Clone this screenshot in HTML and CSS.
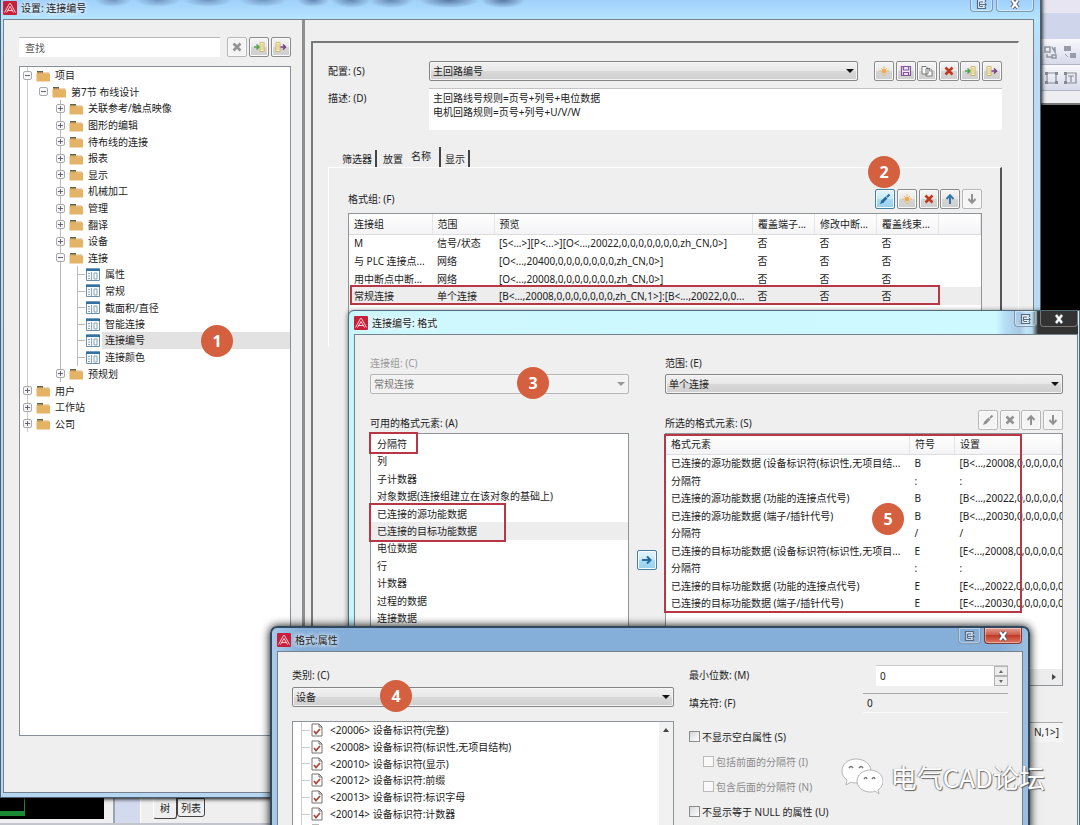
FILE: index.html
```html
<!DOCTYPE html>
<html lang="zh-CN">
<head>
<meta charset="utf-8">
<title>设置: 连接编号</title>
<link rel="stylesheet" href="styles.css">
</head>
<body>
<svg class="defs" aria-hidden="true">
  <symbol id="logo" viewBox="0 0 14 14"><rect width="14" height="14" rx="1" fill="#c8203c"/><path d="M1.500 11.500 6.500 2.500h1l5 9M3.500 11.500 7 5.500l3.500 6M4.500 9.500h5" fill="none" stroke="#ffdfe0" stroke-width=".9"/></symbol>
  <symbol id="folder" viewBox="0 0 14 13"><path d="M1 2h6v2H1z" fill="#596247"/><path d="M1 3.500h5l1 1h7v8H.5v-8z" fill="#e4b366"/><path d="M1 4h12" stroke="#c99a55" stroke-width=".8"/></symbol>
  <symbol id="sheet" viewBox="0 0 14 13"><path d="M.5 1h13v11.500H.5z" fill="#f5fbff" stroke="#6f8fa8"/><path d="M0 .5h14V3H0z" fill="#34709f"/><path d="M2 5.500h2M2 8h2M2 10.500h2M5.500 4v8M8 5h3v6H8z" stroke="#809bb0" fill="none" stroke-width=".9"/></symbol>
  <symbol id="cross" viewBox="0 0 12 12"><path d="m2.500 2.500 7 7m0-7-7 7" stroke="currentColor" stroke-width="2.600" fill="none"/></symbol>
  <symbol id="import" viewBox="0 0 12 12"><path d="M1 6h4M3.500 3.500 6 6 3.500 8.500" stroke="#50a34c" stroke-width="1.500" fill="none"/><path d="M7 1.500h4v9H7zM7.500 4h3M7.500 6h3M7.500 8h3" stroke="#c6ad55" fill="#fff7cf" stroke-width=".8"/></symbol>
  <symbol id="export" viewBox="0 0 12 12"><path d="M1 1.500h4v9H1zM1.500 4h3M1.500 6h3M1.500 8h3" stroke="#c6ad55" fill="#fff7cf" stroke-width=".8"/><path d="M5.500 6H10M8 3.500 10.500 6 8 8.500" stroke="#75418b" stroke-width="1.500" fill="none"/></symbol>
  <symbol id="star" viewBox="0 0 12 12"><path d="M6 1v10M1 6h10M3 3l6 6m0-6L3 9" stroke="#eeb968" stroke-width="1"/><circle cx="6" cy="6" r="2" fill="#efa84a"/></symbol>
  <symbol id="save" viewBox="0 0 12 12"><path d="M1.500 1.500h9v9h-9zM3.500 1.500V5h5V1.500M3.500 10.500v-3h5v3" fill="#f4eafa" stroke="#84559f" stroke-width="1.200"/></symbol>
  <symbol id="copy" viewBox="0 0 12 12"><path d="M1 1.500h4l2 2V9H1zM5 3.500h4l2 2V11H5z" fill="#fff" stroke="#777"/><path d="M8.500 3.500v2.500H11" fill="none" stroke="#777" stroke-width=".8"/></symbol>
  <symbol id="pen" viewBox="0 0 12 12"><path d="m1 11 1.500-4 2.500 2.500z" fill="currentColor"/><path d="m3.500 8.500 4-4" stroke="currentColor" stroke-width="2.800"/><path d="m8 4 2.500-2.500" stroke="currentColor" stroke-width="2"/></symbol>
  <symbol id="up" viewBox="0 0 12 12"><path d="M6 11V3M2.500 6 6 2.300 9.500 6" fill="none" stroke="currentColor" stroke-width="2"/></symbol>
  <symbol id="down" viewBox="0 0 12 12"><path d="M6 1v8M2.500 6 6 9.700 9.500 6" fill="none" stroke="currentColor" stroke-width="2"/></symbol>
  <symbol id="right" viewBox="0 0 12 12"><path d="M1 6h8M6 2.500 9.500 6 6 9.500" fill="none" stroke="currentColor" stroke-width="2"/></symbol>
  <symbol id="dock" viewBox="0 0 12 12"><path d="M9.500 4V1.500h-8v9h8V8.500" fill="#fff8" stroke="currentColor" stroke-width="1.200"/><path d="M3.500 4h3.500M3.500 8V4M3.500 6.500H10M3.500 8.500H7M8.500 4.500l2 2-2 2" fill="none" stroke="currentColor" stroke-width="1"/></symbol>
  <symbol id="close" viewBox="0 0 12 12"><path d="m3 2 6 8m0-8L3 10" stroke="#4b5561" stroke-width="3.800"/><path d="m3 2 6 8m0-8L3 10" stroke="#fff" stroke-width="2.200"/></symbol>
  <symbol id="prop" viewBox="0 0 12 14"><path d="M1 1h7l3 3v9H1z" fill="#fff" stroke="#77716f"/><path d="M8 1v3h3" fill="none" stroke="#77716f"/><path d="m3 8 2 2.500L9 6" fill="none" stroke="#a64b3c" stroke-width="1.800"/></symbol>
</svg>

<main class="desktop">
  <aside class="app-tools" aria-label="工具栏">
    <div class="tool-head"></div>
    <div class="tool-band"></div>
    <div class="tool-row"><svg viewBox="0 0 34 14"><path d="M1 2h5v5H1zM8 2l3 5V2M3 9v3h6M8 10h4v3H8z" fill="none" stroke="#9295a1" stroke-width="1.500"/><path d="M20 1h7v5h-7zM26 8h6v5h-6z" fill="#999ca8"/><path d="M21 9l3 3" stroke="#999ca8"/></svg></div>
    <div class="tool-row"><svg viewBox="0 0 34 14"><path d="M3 2h9v10H3zM22 2h10v10H22zM24 5h6M27 5v6" fill="none" stroke="#858994" stroke-width="1.200"/><path d="M1 1h3v3H1zM11 1h3v3h-3zM1 10h3v3H1zM11 10h3v3h-3zM20 1h3v3h-3zM20 10h3v3h-3z" fill="#858994"/></svg></div>
    <div class="tool-foot"></div>
  </aside>
  <footer class="app-foot">
    <div class="cad"><i></i></div>
    <div class="dock-strip"></div>
    <nav class="foot-tabs"><button class="foot-tab on">树</button><button class="foot-tab">列表</button></nav>
  </footer>

  <section class="window settings" aria-label="设置: 连接编号">
    <header class="title"><svg><use href="#logo"/></svg><h1>设置: 连接编号</h1>
      <div class="caption"><button aria-label="停靠"><svg><use href="#dock"/></svg></button><button class="x" aria-label="关闭"><svg><use href="#close"/></svg></button></div>
    </header>
    <div class="client split">
      <div class="nav">
        <div class="search"><input type="text" placeholder="查找" aria-label="查找">
          <div class="tools three"><button class="tool off" aria-label="清除"><svg><use href="#cross"/></svg></button><button class="tool" aria-label="导入"><svg><use href="#import"/></svg></button><button class="tool" aria-label="导出"><svg><use href="#export"/></svg></button></div>
        </div>
        <div class="tree-box">
          <ul class="tree">
            <li><button class="tog minus" aria-label="折叠"></button><svg><use href="#folder"/></svg><span>项目</span></li>
            <li class="l1"><button class="tog minus" aria-label="折叠"></button><svg><use href="#folder"/></svg><span>第7节 布线设计</span></li>
            <li class="l2"><button class="tog" aria-label="展开"></button><svg><use href="#folder"/></svg><span>关联参考/触点映像</span></li>
            <li class="l2"><button class="tog" aria-label="展开"></button><svg><use href="#folder"/></svg><span>图形的编辑</span></li>
            <li class="l2"><button class="tog" aria-label="展开"></button><svg><use href="#folder"/></svg><span>待布线的连接</span></li>
            <li class="l2"><button class="tog" aria-label="展开"></button><svg><use href="#folder"/></svg><span>报表</span></li>
            <li class="l2"><button class="tog" aria-label="展开"></button><svg><use href="#folder"/></svg><span>显示</span></li>
            <li class="l2"><button class="tog" aria-label="展开"></button><svg><use href="#folder"/></svg><span>机械加工</span></li>
            <li class="l2"><button class="tog" aria-label="展开"></button><svg><use href="#folder"/></svg><span>管理</span></li>
            <li class="l2"><button class="tog" aria-label="展开"></button><svg><use href="#folder"/></svg><span>翻译</span></li>
            <li class="l2"><button class="tog" aria-label="展开"></button><svg><use href="#folder"/></svg><span>设备</span></li>
            <li class="l2"><button class="tog minus" aria-label="折叠"></button><svg><use href="#folder"/></svg><span>连接</span></li>
            <li class="l3"><svg><use href="#sheet"/></svg><span>属性</span></li>
            <li class="l3"><svg><use href="#sheet"/></svg><span>常规</span></li>
            <li class="l3"><svg><use href="#sheet"/></svg><span>截面积/直径</span></li>
            <li class="l3"><svg><use href="#sheet"/></svg><span>智能连接</span></li>
            <li class="l3 sel"><svg><use href="#sheet"/></svg><span>连接编号</span></li>
            <li class="l3"><svg><use href="#sheet"/></svg><span>连接颜色</span></li>
            <li class="l2"><button class="tog" aria-label="展开"></button><svg><use href="#folder"/></svg><span>预规划</span></li>
            <li><button class="tog" aria-label="展开"></button><svg><use href="#folder"/></svg><span>用户</span></li>
            <li><button class="tog" aria-label="展开"></button><svg><use href="#folder"/></svg><span>工作站</span></li>
            <li><button class="tog" aria-label="展开"></button><svg><use href="#folder"/></svg><span>公司</span></li>
          </ul>
        </div>
      </div>
      <div class="page">
        <div class="group">
          <div class="config">
            <label for="cfg">配置: (S)</label>
            <div class="config-line"><span class="combo"><select id="cfg"><option>主回路编号</option></select></span>
              <div class="tools six"><button class="tool" aria-label="新建"><svg><use href="#star"/></svg></button><button class="tool" aria-label="保存"><svg><use href="#save"/></svg></button><button class="tool" aria-label="复制"><svg><use href="#copy"/></svg></button><button class="tool red" aria-label="删除"><svg><use href="#cross"/></svg></button><button class="tool" aria-label="导入"><svg><use href="#import"/></svg></button><button class="tool" aria-label="导出"><svg><use href="#export"/></svg></button></div>
            </div>
            <label for="desc" class="desc-label">描述: (D)</label>
            <textarea id="desc">主回路线号规则=页号+列号+电位数据
电机回路规则=页号+列号+U/V/W</textarea>
          </div>
          <nav class="tabs"><button>筛选器</button><button>放置</button><button class="on">名称</button><button>显示</button></nav>
          <div class="tab-page">
            <div class="bar"><span>格式组: (F)</span>
              <div class="tools five"><button class="tool hot" aria-label="编辑"><svg><use href="#pen"/></svg></button><button class="tool" aria-label="新建"><svg><use href="#star"/></svg></button><button class="tool red" aria-label="删除"><svg><use href="#cross"/></svg></button><button class="tool blue" aria-label="上移"><svg><use href="#up"/></svg></button><button class="tool off" aria-label="下移"><svg><use href="#down"/></svg></button></div>
            </div>
            <div class="table-box formats">
              <table>
                <colgroup><col class="w83"><col class="w62"><col><col class="w62"><col class="w62"><col class="w62"><col class="w42"></colgroup>
                <thead><tr><th>连接组</th><th>范围</th><th>预览</th><th>覆盖端子...</th><th>修改中断...</th><th>覆盖线束...</th><th></th></tr></thead>
                <tbody>
                  <tr><td>M</td><td>信号/状态</td><td>[S&lt;...&gt;][P&lt;...&gt;][O&lt;...,20022,0,0,0,0,0,0,0,zh_CN,0&gt;]</td><td>否</td><td>否</td><td>否</td><td></td></tr>
                  <tr><td>与 PLC 连接点...</td><td>网络</td><td>[O&lt;...,20400,0,0,0,0,0,0,0,zh_CN,0&gt;]</td><td>否</td><td>否</td><td>否</td><td></td></tr>
                  <tr><td>用中断点中断...</td><td>网络</td><td>[O&lt;...,20008,0,0,0,0,0,0,0,zh_CN,0&gt;]</td><td>否</td><td>否</td><td>否</td><td></td></tr>
                  <tr class="picked"><td>常规连接</td><td>单个连接</td><td>[B&lt;...,20008,0,0,0,0,0,0,0,zh_CN,1&gt;]:[B&lt;...,20022,0,0...</td><td>否</td><td>否</td><td>否</td><td></td></tr>
                </tbody>
              </table>
            </div>
          </div>
        </div>
      </div>
    </div>
  </section>

  <section class="window format" aria-label="连接编号: 格式">
    <header class="title"><svg><use href="#logo"/></svg><h2>连接编号: 格式</h2>
      <div class="caption"><button aria-label="停靠"><svg><use href="#dock"/></svg></button><button class="x dark" aria-label="关闭"><svg><use href="#close"/></svg></button></div>
    </header>
    <div class="client format-grid">
      <div class="col">
        <label for="grp" class="dim">连接组: (C)</label>
        <span class="combo disabled"><select id="grp" disabled><option>常规连接</option></select></span>
        <div class="bar"><span>可用的格式元素: (A)</span></div>
        <ul class="list">
          <li>分隔符</li><li>列</li><li>子计数器</li><li>对象数据(连接组建立在该对象的基础上)</li><li>已连接的源功能数据</li><li class="picked">已连接的目标功能数据</li><li>电位数据</li><li>行</li><li>计数器</li><li>过程的数据</li><li>连接数据</li>
        </ul>
      </div>
      <div class="move"><button class="tool hot" aria-label="添加"><svg><use href="#right"/></svg></button></div>
      <div class="col">
        <label for="rng">范围: (E)</label>
        <span class="combo"><select id="rng"><option>单个连接</option></select></span>
        <div class="bar"><span>所选的格式元素: (S)</span>
          <div class="tools four"><button class="tool off" aria-label="编辑"><svg><use href="#pen"/></svg></button><button class="tool off" aria-label="删除"><svg><use href="#cross"/></svg></button><button class="tool off" aria-label="上移"><svg><use href="#up"/></svg></button><button class="tool off" aria-label="下移"><svg><use href="#down"/></svg></button></div>
        </div>
        <div class="table-box chosen">
          <table>
            <colgroup><col><col class="w45"><col class="w107"></colgroup>
            <thead><tr><th>格式元素</th><th>符号</th><th>设置</th></tr></thead>
            <tbody>
              <tr><td>已连接的源功能数据 (设备标识符(标识性,无项目结...</td><td>B</td><td>[B&lt;...,20008,0,0,0,0,0,0</td></tr>
              <tr><td>分隔符</td><td>:</td><td>:</td></tr>
              <tr><td>已连接的源功能数据 (功能的连接点代号)</td><td>B</td><td>[B&lt;...,20022,0,0,0,0,0,0</td></tr>
              <tr><td>已连接的源功能数据 (端子/插针代号)</td><td>B</td><td>[B&lt;...,20030,0,0,0,0,0,0</td></tr>
              <tr><td>分隔符</td><td>/</td><td>/</td></tr>
              <tr><td>已连接的目标功能数据 (设备标识符(标识性,无项目...</td><td>E</td><td>[E&lt;...,20008,0,0,0,0,0,0</td></tr>
              <tr><td>分隔符</td><td>:</td><td>:</td></tr>
              <tr><td>已连接的目标功能数据 (功能的连接点代号)</td><td>E</td><td>[E&lt;...,20022,0,0,0,0,0,0</td></tr>
              <tr><td>已连接的目标功能数据 (端子/插针代号)</td><td>E</td><td>[E&lt;...,20030,0,0,0,0,0,0</td></tr>
            </tbody>
          </table>
          <div class="hscroll"><i></i></div>
        </div>
        <output class="preview">N,1&gt;]</output>
      </div>
    </div>
  </section>

  <section class="window props" aria-label="格式:属性">
    <header class="title"><svg><use href="#logo"/></svg><h2>格式:属性</h2>
      <div class="caption"><button aria-label="停靠"><svg><use href="#dock"/></svg></button><button class="x hotred" aria-label="关闭"><svg><use href="#close"/></svg></button></div>
    </header>
    <div class="client props-grid">
      <div class="col">
        <label for="cat">类别: (C)</label>
        <span class="combo"><select id="cat"><option>设备</option></select></span>
        <div class="prop-box">
          <ul class="prop-list">
            <li><svg><use href="#prop"/></svg>&lt;20006&gt; 设备标识符(完整)</li>
            <li><svg><use href="#prop"/></svg>&lt;20008&gt; 设备标识符(标识性,无项目结构)</li>
            <li><svg><use href="#prop"/></svg>&lt;20010&gt; 设备标识符(显示)</li>
            <li><svg><use href="#prop"/></svg>&lt;20012&gt; 设备标识符:前缀</li>
            <li><svg><use href="#prop"/></svg>&lt;20013&gt; 设备标识符:标识字母</li>
            <li><svg><use href="#prop"/></svg>&lt;20014&gt; 设备标识符:计数器</li>
            <li><svg><use href="#prop"/></svg></li>
          </ul>
          <div class="vscroll"><i></i></div>
        </div>
      </div>
      <div class="options">
        <div class="field"><label for="min">最小位数: (M)</label><span class="spin"><input id="min" type="text" value="0"><span class="steps"><button aria-label="增加"><i></i></button><button class="dn" aria-label="减少"><i></i></button></span></span></div>
        <div class="field"><label for="fill">填充符: (F)</label><input id="fill" class="flat" type="text" value="0"></div>
        <div class="checks">
          <label><input type="checkbox">不显示空白属性 (S)</label>
          <label class="sub"><input type="checkbox" disabled>包括前面的分隔符 (I)</label>
          <label class="sub"><input type="checkbox" disabled>包含后面的分隔符 (N)</label>
          <label><input type="checkbox">不显示等于 NULL 的属性 (U)</label>
        </div>
      </div>
    </div>
  </section>

  <div class="mark m-row"></div>
  <div class="mark m-sep"></div>
  <div class="mark m-data"></div>
  <div class="mark m-table"></div>
  <b class="pin p1">1</b><b class="pin p2">2</b><b class="pin p3">3</b><b class="pin p4">4</b><b class="pin p5">5</b>
  <div class="brand">
    <svg viewBox="0 0 42 38"><g fill="#fff" stroke="#b5b5b5" stroke-width="1"><path d="M15 1C7 1 1 6 1 13c0 4 2 7 5 9l-1 5 5-3c2 1 4 1 6 1 8 0 14-5 14-12S23 1 15 1z"/><path d="M29 12c-7 0-13 5-13 11s6 11 13 11c2 0 3 0 5-1l4 3-1-4c3-2 5-5 5-9 0-6-6-11-13-11z"/></g><g fill="none" stroke="#777" stroke-width="1.500"><path d="M8 10q2-3 4 0M18 10q2-3 4 0M23 21q2-3 3 0M31 21q2-3 3 0"/></g></svg>
    <span>电气CAD论坛</span>
  </div>
</main>
</body>
</html>
```

FILE: styles.css
```css
* { box-sizing: border-box; }
body {
  margin: 0;
  font: 10px/14px "Noto Sans", "Noto Sans CJK SC", sans-serif;
  color: #222;
}
h1, h2, ul { margin: 0; padding: 0; font-size: 10px; font-weight: 400; list-style: none; }
button, input, select, textarea { font: inherit; color: inherit; margin: 0; padding: 0; border: 0; background: none; border-radius: 0; }
svg { display: block; flex: none; }
.defs { position: absolute; width: 0; height: 0; }

.desktop { position: relative; height: 100vh; overflow: hidden; background: #000; }

/* application behind the dialogs */
.app-tools { position: absolute; top: 0; right: 0; width: 44px; display: flex; flex-direction: column; background: #f1f2f8; }
.tool-head { height: 13px; background: #e6e5f1; }
.tool-band { height: 26px; background: #cfd5ea; }
.tool-row { height: 26px; padding: 6px 0 0 8px; background: linear-gradient(#f8f8fd, #d7daea); border-bottom: 1px solid #b2b5c6; }
.tool-row svg { width: 34px; height: 14px; }
.tool-foot { height: 14px; background: #eeeef2; border-bottom: 2px solid #777; }
.app-foot { position: absolute; left: 0; right: 0; bottom: 0; height: 30px; display: flex; background: #efeff0; border-bottom: 2px solid #c2c5cc; }
.cad { width: 104px; height: 24px; background: #000; display: flex; align-items: flex-end; padding-bottom: 3px; }
.cad i { width: 25px; height: 18px; border: 1px solid #1c8a32; border-width: 0 1px 5px 0; }
.dock-strip { width: 28px; margin-left: 9px; background: #d3daee; border-left: 2px solid #9ba2b5; border-right: 1px solid #fff; }
.foot-tabs { display: flex; align-items: flex-start; padding: 3px 0 0 12px; }
.foot-tab { height: 19px; padding: 0 3px; border: 1px solid #444; border-radius: 0 0 3px 3px; }
.foot-tab.on { height: 21px; padding: 0 6px; border-top: 0; border-left-color: #fff; }

/* dialog frames */
.window { position: absolute; display: flex; flex-direction: column; border: 1px solid #4e6070; }
.title { display: flex; align-items: center; padding-left: 6px; }
.title svg { width: 14px; height: 14px; }
.title h1, .title h2 { padding-left: 4px; text-shadow: 0 0 5px #fff, 0 0 5px #fff; }
.client { flex: 1; min-height: 0; background: #efeff0; border: 1px solid #75828e; }
.caption { margin-left: auto; align-self: flex-start; display: flex; gap: 3px; }
.caption button { width: 23px; height: 16px; display: grid; place-items: center; color: #5b6b7c; border: 1px solid #8299ad; border-top: 0; border-radius: 0 0 4px 4px; box-shadow: inset 0 0 0 1px #ffffff66; }
.caption .x { width: 38px; }
.caption svg { width: 12px; height: 12px; }
.caption .dark { background: #333; border-color: #777; box-shadow: none; }
.caption .hotred { background: linear-gradient(#e3a090, #cf5c4b 45%, #c03a28 50%, #dd7861); border-color: #7d3a39; }

.settings { left: 0; right: 39px; top: -5px; bottom: 27px; padding: 0 6px 4px 2px; background: linear-gradient(#9ccbfb, #b7e6ff 24px, #bcdcf5 60px, #b6d6f1); box-shadow: 1px 1px 4px #000; }
.settings .title {
  height: 23px; padding: 0;
  background:
    radial-gradient(ellipse 18px 7px at 110px 4px, #44618a88, transparent),
    radial-gradient(ellipse 22px 7px at 155px 4px, #44618a88, transparent),
    radial-gradient(ellipse 24px 7px at 205px 4px, #44618a88, transparent),
    radial-gradient(ellipse 24px 7px at 260px 4px, #44618a88, transparent),
    radial-gradient(ellipse 16px 7px at 310px 4px, #44618aaa, transparent),
    radial-gradient(ellipse 20px 8px at 348px 4px, #44618aaa, transparent),
    radial-gradient(ellipse 22px 8px at 388px 4px, #44618aaa, transparent),
    radial-gradient(ellipse 30px 8px at 446px 4px, #44618acc, transparent),
    radial-gradient(ellipse 22px 8px at 500px 4px, #44618acc, transparent);
}
.format { left: 348px; right: 0; top: 310px; bottom: -8px; padding: 0 1px 0 5px; background: #c4f6fc; border-color: #526a78; border-radius: 6px 0 0 0; box-shadow: -1px 0 4px #0006; }
.format .title { height: 23px; background: linear-gradient(90deg, #cdf7fd 0, #cdf9ff calc(100% - 82px), #b5dcf5 calc(100% - 72px), #a8c8e4 calc(100% - 58px), #bfe6f8 calc(100% - 52px), #b8dcee calc(100% - 46px), #333 calc(100% - 40px)); padding-left: 0; }
.props { left: 270px; right: 50px; top: 626px; bottom: -8px; padding: 0 6px; background: linear-gradient(90deg, #a9cbe9, #85aed8 30px, #85aed8 calc(100% - 30px), #9dbfe0); border: 2px solid #31475c; border-radius: 7px 7px 0 0; box-shadow: 0 0 10px #000; }
.props .title { height: 23px; padding: 0; margin-left: -1px; }
.props .client { border-bottom: 0; margin-left: -1px; margin-right: -1px; }

/* shared controls */
.tools { display: flex; justify-content: space-between; }
.three { width: 64px; }
.four { width: 85px; }
.five { width: 107px; }
.six { width: 128px; }
.tool { width: 20px; height: 20px; display: grid; place-items: center; border: 1px solid #8b8b8b; border-radius: 2px; background: linear-gradient(#f5f5f5, #e8e8e8 49%, #d5d5d5 50%, #cfcfcf); box-shadow: inset 0 0 0 1px #fafafa; }
.tool svg { width: 12px; height: 12px; }
.tool.off { background: #f4f4f4; border-color: #b5b7b9; color: #929292; }
.tool.red { color: #c03a22; }
.tool.blue { color: #3675a9; }
.tool.hot { color: #286a9d; border-color: #4580a0; background: linear-gradient(#e4f5fd, #c6e9f9 49%, #a8dcf5 50%, #98d0ec); }
.combo { position: relative; display: block; flex: 1; }
.combo select { display: block; width: 100%; height: 20px; padding-left: 3px; appearance: none; border: 1px solid #858585; border-radius: 2px; background: linear-gradient(#f1f1f1, #e8e8e8 49%, #d9d9d9 50%, #cfcfcf); box-shadow: inset 0 0 0 1px #f5f5f5; opacity: 1; }
.combo::after { content: ""; position: absolute; right: 4px; top: 8px; border: 4px solid transparent; border-top-color: #111; border-bottom: 0; pointer-events: none; }
.combo.disabled select { color: #777; background: #f2f2f2; border-color: #b4b6b8; }
.combo.disabled::after { border-top-color: #999; }
.dim { color: #999; }
.bar { display: flex; align-items: center; justify-content: space-between; height: 20px; }

/* settings dialog */
.split { display: flex; }
.nav { width: 301px; padding: 17px 11px 56px 15px; display: flex; flex-direction: column; border-right: 3px solid #8e8f91; }
.search { display: flex; justify-content: space-between; margin-bottom: 9px; }
.search input { width: 201px; height: 20px; padding-left: 6px; background: #fff; border-top: 1px solid #b5b7b9; }
.search input::placeholder { color: #555; }
.tree-box { flex: 1; background: #fff; border: 1px solid #878f98; }
.tree { height: 365px; display: grid; grid-auto-rows: 1fr; }
.tree li { display: flex; align-items: center; padding-left: 3px; background: linear-gradient(#ccc, #ccc) 7px 0 / 1px 100% no-repeat; }
.tree svg { width: 14px; height: 13px; margin: 0 5px 0 4px; }
.tree .l1 { padding-left: 19px; }
.tree .l2, .tree .l3 { background: linear-gradient(#ccc, #ccc) 7px 0 / 1px 100% no-repeat, linear-gradient(#bbb, #bbb) 40px 0 / 1px 100% no-repeat; }
.tree .l2 { padding-left: 36px; }
.tree .l3 { padding-left: 62px; background: linear-gradient(#ccc, #ccc) 7px 0 / 1px 100% no-repeat, linear-gradient(#bbb, #bbb) 40px 0 / 1px 100% no-repeat, linear-gradient(#bbb, #bbb) 57px 0 / 1px 100% no-repeat, linear-gradient(#bbb, #bbb) 57px 8px / 8px 1px no-repeat; }
.tree .sel span { flex: 1; align-self: stretch; background: #e2e2e2; margin-left: -3px; padding: 1px 0 0 3px; }
.tog { width: 9px; height: 9px; border: 1px solid #aaa; border-radius: 2px; background: linear-gradient(#667, #667) center / 5px 1px no-repeat, linear-gradient(#667, #667) center / 1px 5px no-repeat, #f6f6f6; }
.tog.minus { background: linear-gradient(#667, #667) center / 5px 1px no-repeat, #f6f6f6; }
.page { flex: 1; min-width: 0; padding: 21px 14px 0 6px; display: flex; }
.group { flex: 1; min-width: 0; padding: 18px 16px 0 15px; border: 1px solid #fafafa; border-top: 2px solid #77787a; border-left: 2px solid #77787a; }
.config { display: grid; grid-template-columns: 86px 1fr; column-gap: 15px; row-gap: 7px; align-items: start; }
.config label { padding-top: 3px; }
.config-line { display: flex; gap: 16px; }
.config textarea { display: block; width: 100%; height: 42px; padding: 2px 4px; background: #fff; border-top: 1px solid #c3c3c3; resize: none; overflow: hidden; }
.tabs { display: flex; align-items: flex-end; height: 37px; padding-left: 10px; }
.tabs button { height: 17px; padding: 0 3px; }
.tabs button:nth-child(1), .tabs button:nth-child(4) { border-right: 2px solid #444; padding-left: 4px; }
.tabs button:nth-child(2) { padding-left: 6px; }
.tabs .on { height: 20px; padding: 0 8px 3px 5px; border-right: 2px solid #444; }
.tab-page { height: 180px; padding: 21px 18px 0 19px; border-top: 1px solid #fff; border-left: 1px solid #fff; border-right: 2px solid #555; }
.tab-page .bar { margin-bottom: 4px; }

.table-box { background: #fff; border: 1px solid #8f9499; overflow: hidden; }
table { width: 100%; table-layout: fixed; border-collapse: collapse; }
th, td { padding: 0 0 0 5px; text-align: left; font-weight: 400; white-space: nowrap; }
th { border-right: 1px solid #e5e5e8; border-bottom: 1px solid #ddd; background: linear-gradient(#fff, #f4f4f6); }
thead tr { height: 20px; }
.picked { background: #ededee; }
.formats { height: 130px; }
.formats table { height: 91px; }
.w83 { width: 83px; }
.w62 { width: 62px; }
.w45 { width: 45px; }
.w42 { width: 42px; }
.w107 { width: 107px; }

/* format dialog */
.format-grid { display: grid; grid-template-columns: 259px 36px 1fr; padding: 21px 14px 0 15px; }
.col { min-width: 0; display: flex; flex-direction: column; }
.col .combo { flex: none; margin: 4px 0 16px; }
.format .bar { margin-bottom: 3px; }
.format .bar > span { padding-top: 6px; }
.list { height: 240px; padding: 1px 0 45px; background: #fff; border: 1px solid #8f9499; display: grid; grid-auto-rows: 1fr; overflow: hidden; }
.list li { display: flex; align-items: center; padding-left: 6px; }
.move { padding: 194px 0 0 8px; }
.chosen { height: 253px; display: flex; flex-direction: column; flex: none; }
.chosen table { height: 178px; }
.hscroll { margin-top: auto; height: 16px; background: #ececec; display: flex; align-items: center; justify-content: flex-end; padding-right: 6px; }
.hscroll i { border: 3px solid transparent; border-left: 4px solid #444; border-right: 0; }
.preview { margin-top: 36px; height: 20px; padding: 2px 4px 0 0; text-align: right; border-top: 1px solid #aaa; background: #f4f4f4; }

/* property dialog */
.props-grid { display: grid; grid-template-columns: 382px 1fr; column-gap: 15px; padding: 16px 14px 0 14px; }
.props .col .combo { margin: 5px 0 14px; }
.prop-box { flex: 1; display: flex; min-height: 0; background: #fff; border: 1px solid #8f9499; overflow: hidden; }
.prop-list { flex: 1; height: 117px; display: grid; grid-auto-rows: 1fr; padding-left: 8px; }
.prop-list li { display: flex; align-items: center; padding-left: 10px; background: linear-gradient(#ccc, #ccc) 0 0 / 1px 100% no-repeat, linear-gradient(#ccc, #ccc) 0 8px / 9px 1px no-repeat; }
.prop-list svg { width: 12px; height: 14px; margin-right: 7px; }
.vscroll { width: 14px; background: #f1f1f1; padding: 6px 4px; }
.vscroll i { display: block; border: 3px solid transparent; border-bottom: 4px solid #444; border-top: 0; }
.field { display: flex; align-items: flex-start; justify-content: space-between; height: 28px; }
.spin { display: flex; width: 132px; height: 21px; margin-top: -3px; background: #fff; border-top: 1px solid #ccc; }
.spin input { flex: 1; min-width: 0; padding-left: 4px; }
.steps { width: 14px; display: grid; }
.steps button { display: grid; place-items: center; border: 1px solid #b2b2b2; background: #ededed; }
.steps i { border: 2px solid transparent; border-bottom: 3px solid #666; border-top: 0; }
.steps .dn i { border-top: 3px solid #666; border-bottom: 0; }
.flat { width: 145px; height: 20px; margin-top: -3px; padding-left: 4px; border-top: 1px solid #aaa; border-bottom: 1px solid #fafafa; }
.checks { display: grid; grid-auto-rows: 25px; }
.checks label { display: flex; align-items: center; gap: 2px; }
.checks input { appearance: none; width: 11px; height: 11px; border: 1px solid #8b8c8e; background: linear-gradient(135deg, #d5d6d8, #fff); }
.checks .sub { padding-left: 14px; gap: 2px; color: #8b8b8b; }
.checks .sub input { border-color: #bbb; background: #f9f9f9; }

/* tutorial annotations */
.mark { position: absolute; border: 2px solid #b93745; }
.m-row { left: 350px; right: 140px; top: 285px; height: 20px; }
.m-sep { left: 369px; width: 49px; top: 432px; height: 22px; }
.m-data { left: 369px; width: 137px; top: 503px; height: 39px; }
.m-table { left: 664px; right: 58px; top: 434px; height: 179px; }
.pin { position: absolute; width: 32px; height: 32px; border-radius: 50%; background: #d5603f; color: #fff; font: 700 16px/32px "Open Sans", sans-serif; text-align: center; }
.p1 { left: 201px; top: 325px; }
.p2 { left: 868px; top: 156px; }
.p3 { left: 517px; top: 367px; }
.p4 { left: 380px; top: 680px; }
.p5 { left: 872px; top: 503px; }
.brand { position: absolute; right: 35px; bottom: 29px; display: flex; align-items: center; gap: 8px; color: #fff; font: 26px/38px "Noto Sans CJK SC", sans-serif; text-shadow: 1px 1px 1px #666, -1px 0 1px #999; }
.brand svg { width: 42px; height: 38px; }
```
